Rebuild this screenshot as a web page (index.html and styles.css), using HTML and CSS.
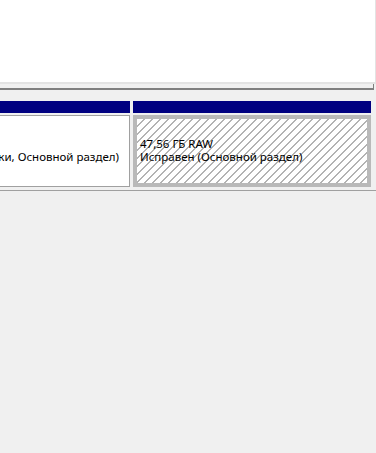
FILE: index.html
```html
<!DOCTYPE html>
<html lang="ru">
<head>
    <meta charset="UTF-8">
    <meta name="viewport" content="width=device-width, initial-scale=1.0">
    <title>Управление дисками</title>
    <link rel="stylesheet" href="styles.css">
</head>
<body>
    <div class="list-pane"></div>

    <div class="hscroll">
        <div class="hscroll-track"></div>
    </div>

    <div class="volume-map">
        <div class="disk-row">
            <div class="partition">
                <div class="partition-head"></div>
                <div class="partition-body">
                    <span>59,44 ГБ NTFS</span>
                    <span>Исправен (Загрузка, Файл подкачки, Основной раздел)</span>
                </div>
            </div>
            <div class="partition partition-raw">
                <div class="partition-head"></div>
                <div class="partition-body">
                    <span>47,56 ГБ RAW</span>
                    <span>Исправен (Основной раздел)</span>
                </div>
            </div>
        </div>
    </div>

    <div class="bottom-pane"></div>
</body>
</html>
```

FILE: styles.css
```css
body {
    margin: 0;
    height: 100vh;
    overflow: hidden;
    background-color: #f0f0f0;
    font-family: "Noto Sans", "Liberation Sans", sans-serif;
    font-size: 11.5px;
    color: #000;
}

.list-pane {
    height: 82px;
    background-color: #fff;
    border-right: 1px solid #e3e3e3;
}

.hscroll {
    height: 19px;
    box-sizing: border-box;
    border-top: 2px solid #e3e3e3;
    padding-right: 2px;
}

.hscroll-track {
    height: 4px;
    border-bottom: 2px solid #7f7f7f;
    border-right: 1px solid #7f7f7f;
}

.volume-map {
    overflow: hidden;
    padding-right: 5px;
    padding-bottom: 3px;
    border-bottom: 1px solid #a0a0a0;
}

.disk-row {
    display: flex;
    justify-content: flex-end;
    gap: 3px;
}

.partition {
    display: flex;
    flex-direction: column;
    gap: 2px;
    flex: none;
}

.partition-head {
    height: 12px;
    background-color: #000080;
}

.partition-body {
    height: 72px;
    box-sizing: border-box;
    display: flex;
    flex-direction: column;
    justify-content: center;
    line-height: 13px;
    white-space: nowrap;
    background-color: #fff;
    border: 1px solid #a0a0a0;
    padding: 0 10px 2px 6px;
}

.partition-raw {
    width: 238px;
}

.partition-raw .partition-body {
    border: 4px solid #b9b9b9;
    padding-left: 3px;
    background: repeating-linear-gradient(135deg, #fff 0, #fff 4.6px, #b3b3b3 4.6px, #b3b3b3 5.66px);
}
```
